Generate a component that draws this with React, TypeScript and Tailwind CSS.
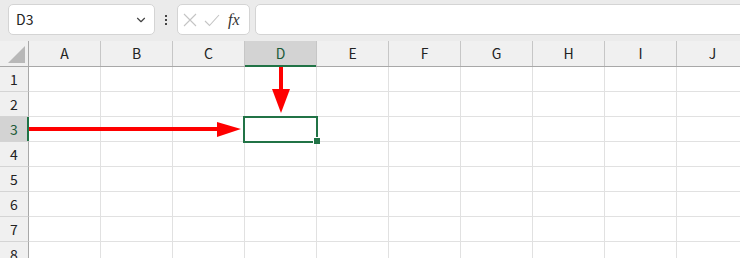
import { ChevronDown } from "lucide-react";

const columns = ["A", "B", "C", "D", "E", "F", "G", "H", "I", "J"];
const rows = [1, 2, 3, 4, 5, 6, 7, 8];

const font = { fontFamily: '"Noto Sans CJK JP", "Noto Sans", sans-serif' };

function Toolbar() {
  return (
    <div className="flex h-[41px] items-start bg-[#ebebeb] pl-[8px] pt-[4px]">
      <div className="flex h-[31px] w-[147px] items-center justify-between rounded-[5px] border border-[#d4d4d4] bg-white pl-[7px] pr-[6px]">
        <span className="text-[14px] text-[#222]" style={font}>
          D3
        </span>
        <ChevronDown size={14} strokeWidth={2} className="text-[#444]" />
      </div>
      <div className="flex h-[31px] w-[22px] flex-col items-center justify-center gap-[2px]">
        <span className="h-[2px] w-[2px] bg-[#444]" />
        <span className="h-[2px] w-[2px] bg-[#444]" />
        <span className="h-[2px] w-[2px] bg-[#444]" />
      </div>
      <div className="flex h-[31px] w-[73px] items-center rounded-[5px] border border-[#d4d4d4] bg-white pl-[5px]">
        <svg width="14" height="14" viewBox="0 0 14 14" className="text-[#c4c4c4]">
          <path d="M1 1 L13 13 M13 1 L1 13" stroke="currentColor" strokeWidth="1.1" fill="none" />
        </svg>
        <svg width="16" height="14" viewBox="0 0 16 14" className="ml-[7px] text-[#c4c4c4]">
          <path d="M1 8 L5.5 12.5 L15 2" stroke="currentColor" strokeWidth="1.1" fill="none" />
        </svg>
        <span
          className="ml-[8px] text-[16px] italic text-[#333]"
          style={{ fontFamily: '"Liberation Serif", "DejaVu Serif", serif' }}
        >
          fx
        </span>
      </div>
      <div className="ml-[5px] mr-[-10px] h-[31px] flex-1 rounded-[5px] border border-[#d4d4d4] bg-white" />
    </div>
  );
}

function Sheet() {
  return (
    <div className="relative flex-1 overflow-hidden bg-white" style={font}>
      <div className="flex h-[26px] border-b border-[#a8a8a8] bg-[#f0f0f0]">
        <div className="relative w-[29px] shrink-0 border-r border-[#a8a8a8]">
          <svg width="18" height="18" viewBox="0 0 18 18" className="absolute left-[8px] top-[5px]">
            <polygon points="0,17 17,0 17,17" fill="#b8b8b8" />
          </svg>
        </div>
        {columns.map((c) => {
          const active = c === "D";
          return (
            <div
              key={c}
              className={
                active
                  ? "relative flex w-[72px] shrink-0 items-center justify-center border-r border-[#c6c6c6] bg-[#d3d3d3] text-[14px] text-[#1c5a38]"
                  : "flex w-[72px] shrink-0 items-center justify-center border-r border-[#c6c6c6] text-[14px] text-[#222]"
              }
            >
              {c}
              {active && <span className="absolute bottom-[-1px] left-0 right-0 h-[2px] bg-[#217346]" />}
            </div>
          );
        })}
      </div>
      {rows.map((r) => {
        const active = r === 3;
        return (
          <div key={r} className="flex h-[25px]">
            <div
              className={
                active
                  ? "relative flex w-[29px] shrink-0 items-center justify-center border-b border-r border-b-[#d4d4d4] border-r-[#a8a8a8] bg-[#d3d3d3] text-[14px] text-[#1c5a38]"
                  : "flex w-[29px] shrink-0 items-center justify-center border-b border-r border-b-[#d4d4d4] border-r-[#a8a8a8] bg-[#f0f0f0] text-[14px] text-[#222]"
              }
            >
              {r}
              {active && <span className="absolute bottom-0 right-[-1px] top-0 w-[2px] bg-[#217346]" />}
            </div>
            {columns.map((c) => (
              <div key={c} className="w-[72px] shrink-0 border-b border-r border-[#e1e1e1]" />
            ))}
          </div>
        );
      })}

      <div className="absolute left-[243px] top-[75px] h-[27px] w-[75px] border-2 border-[#217346]" />
      <div className="absolute left-[313px] top-[96px] h-[7px] w-[7px] border-l border-t border-white bg-[#217346]" />

      <svg className="absolute left-0 top-0" width="740" height="217" viewBox="0 0 740 217">
        <rect x="29" y="86" width="190" height="4" fill="#ff0000" />
        <polygon points="217,81 241,88 217,96" fill="#ff0000" />
        <rect x="279" y="26" width="4" height="24" fill="#ff0000" />
        <polygon points="272,48 290,48 281,72" fill="#ff0000" />
      </svg>
    </div>
  );
}

export default function App() {
  return (
    <div className="flex h-[258px] w-[740px] flex-col overflow-hidden bg-white">
      <Toolbar />
      <Sheet />
    </div>
  );
}
